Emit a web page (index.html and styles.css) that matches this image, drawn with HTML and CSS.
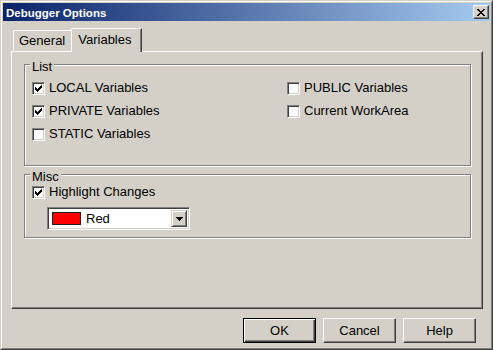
FILE: index.html
```html
<!DOCTYPE html>
<html>
<head>
<meta charset="utf-8">
<title>Debugger Options</title>
<link rel="stylesheet" href="styles.css">
</head>
<body>
<div class="window">
  <div class="frame">
    <div class="titlebar">
      <span class="title">Debugger Options</span>
      <div class="close">
        <svg width="8" height="7" viewBox="0 0 8 7"><path fill="#000" d="M0 0h2v1h-2zM6 0h2v1h-2zM1 1h2v1h-2zM5 1h2v1h-2zM2 2h4v1h-4zM3 3h2v1h-2zM2 4h4v1h-4zM1 5h2v1h-2zM5 5h2v1h-2zM0 6h2v1h-2zM6 6h2v1h-2z"/></svg>
      </div>
    </div>
    <div class="body">
      <div class="tabs">
        <div class="tab">General</div>
        <div class="tab active">Variables</div>
      </div>
      <div class="panel">
        <div class="group list">
          <div class="legend">List</div>
          <div class="cols">
            <div class="col col-left">
              <div class="row"><span class="cb"><svg width="11" height="11" viewBox="0 0 11 11"><path fill="#000" d="M2 4h1v3h-1zM3 5h1v3h-1zM4 6h1v3h-1zM5 5h1v3h-1zM6 4h1v3h-1zM7 3h1v3h-1zM8 2h1v3h-1z"/></svg></span><span class="label">LOCAL Variables</span></div>
              <div class="row"><span class="cb"><svg width="11" height="11" viewBox="0 0 11 11"><path fill="#000" d="M2 4h1v3h-1zM3 5h1v3h-1zM4 6h1v3h-1zM5 5h1v3h-1zM6 4h1v3h-1zM7 3h1v3h-1zM8 2h1v3h-1z"/></svg></span><span class="label">PRIVATE Variables</span></div>
              <div class="row"><span class="cb"></span><span class="label">STATIC Variables</span></div>
            </div>
            <div class="col">
              <div class="row"><span class="cb"></span><span class="label">PUBLIC Variables</span></div>
              <div class="row"><span class="cb"></span><span class="label">Current WorkArea</span></div>
            </div>
          </div>
        </div>
        <div class="group misc">
          <div class="legend">Misc</div>
          <div class="row misc-row"><span class="cb"><svg width="11" height="11" viewBox="0 0 11 11"><path fill="#000" d="M2 4h1v3h-1zM3 5h1v3h-1zM4 6h1v3h-1zM5 5h1v3h-1zM6 4h1v3h-1zM7 3h1v3h-1zM8 2h1v3h-1z"/></svg></span><span class="label">Highlight Changes</span></div>
          <div class="combo">
            <span class="swatch"></span>
            <span class="combo-text">Red</span>
            <span class="drop">
              <svg width="7" height="4" viewBox="0 0 7 4"><path fill="#000" d="M0 0h7v1h-1v1h-1v1h-1v1h-1v-1h-1v-1h-1v-1h-1z"/></svg>
            </span>
          </div>
        </div>
      </div>
      <div class="buttons">
        <div class="btn default">OK</div>
        <div class="btn">Cancel</div>
        <div class="btn">Help</div>
      </div>
    </div>
  </div>
</div>
</body>
</html>
```
FILE: styles.css
```css
html, body {
  margin: 0;
  padding: 0;
  background: #D4D0C8;
}
body {
  font-family: "Liberation Sans", Arial, sans-serif;
  font-size: 13px;
  color: #000;
}
.window {
  width: 493px;
  height: 350px;
  box-sizing: border-box;
  border: 1px solid;
  border-color: #D4D0C8 #404040 #404040 #D4D0C8;
  background: #D4D0C8;
}
.frame {
  height: 100%;
  box-sizing: border-box;
  border: 1px solid;
  border-color: #fff #808080 #808080 #fff;
  padding: 1px;
  display: flex;
  flex-direction: column;
}
.titlebar {
  height: 18px;
  flex: none;
  display: flex;
  align-items: center;
  justify-content: space-between;
  background: linear-gradient(to right, #0A246A, #A6CAF0);
  padding-left: 3px;
}
.title {
  color: #fff;
  font-weight: bold;
  font-size: 11.5px;
  line-height: 14px;
  padding-top: 2px;
}
.close {
  width: 16px;
  height: 14px;
  box-sizing: border-box;
  margin-right: 1px;
  background: #D4D0C8;
  border: 1px solid;
  border-color: #fff #404040 #404040 #fff;
  box-shadow: inset -1px -1px #808080;
  display: flex;
  align-items: center;
  justify-content: center;
  padding-right: 1px;
}
.close svg { display: block; }
.body {
  flex: 1;
  display: flex;
  flex-direction: column;
  padding: 7px 7px 4px 8px;
}
.tabs {
  height: 23px;
  flex: none;
  display: flex;
  align-items: flex-start;
  padding-left: 2px;
}
.tab {
  margin-top: 2px;
  height: 21px;
  box-sizing: border-box;
  padding: 3px 7px 0 5px;
  line-height: 13px;
  border-top: 1px solid #fff;
  border-left: 1px solid #fff;
  border-right: 1px solid #404040;
  box-shadow: inset -1px 0 #808080;
  border-top-left-radius: 2px;
  background: #D4D0C8;
}
.tab.active {
  margin: 0 0 -1px -2px;
  height: 24px;
  padding: 4px 10px 0 6px;
  position: relative;
  z-index: 1;
}
.panel {
  flex: 1;
  box-sizing: border-box;
  border: 1px solid;
  border-color: #fff #404040 #404040 #fff;
  box-shadow: inset -1px -1px #808080;
  padding: 12px 0 0 12px;
}
.group {
  width: 447px;
  box-sizing: border-box;
  border: 1px solid #808080;
  box-shadow: inset 1px 1px #fff, 1px 1px #fff;
}
.group.list { height: 102px; }
.group.misc { height: 64px; margin-top: 8px; }
.legend {
  width: fit-content;
  margin: -5px 0 0 5px;
  padding: 0 2px;
  line-height: 13px;
  background: #D4D0C8;
}
.cols {
  display: flex;
  margin-top: 9px;
  padding-left: 7px;
}
.col {
  display: flex;
  flex-direction: column;
  gap: 10px;
}
.col-left { width: 255px; }
.row {
  display: flex;
  align-items: flex-start;
  height: 13px;
}
.misc-row {
  margin: 3px 0 0 7px;
}
.cb {
  width: 13px;
  height: 13px;
  box-sizing: border-box;
  flex: none;
  background: #fff;
  border: 1px solid;
  border-color: #808080 #fff #fff #808080;
  box-shadow: inset 1px 1px #404040, inset -1px -1px #D4D0C8;
}
.cb svg { display: block; }
.label {
  margin-left: 4px;
  line-height: 11px;
  white-space: nowrap;
}
.combo {
  margin: 8px 0 0 22px;
  width: 143px;
  height: 23px;
  box-sizing: border-box;
  border: 1px solid;
  border-color: #808080 #fff #fff #808080;
  box-shadow: inset 1px 1px #404040, inset -1px -1px #D4D0C8;
  background: #fff;
  padding: 1px 2px 1px 1px;
  display: flex;
  align-items: center;
}
.swatch {
  width: 29px;
  height: 13px;
  box-sizing: border-box;
  margin-left: 3px;
  background: #FF0000;
  border: 1px solid #202020;
  flex: none;
}
.combo-text {
  margin-left: 5px;
  line-height: 13px;
  flex: 1;
}
.drop {
  width: 16px;
  height: 17px;
  box-sizing: border-box;
  background: #D4D0C8;
  border: 1px solid;
  border-color: #D4D0C8 #404040 #404040 #D4D0C8;
  box-shadow: inset 1px 1px #fff, inset -1px -1px #808080;
  display: flex;
  align-items: center;
  justify-content: center;
}
.drop svg { display: block; }
.buttons {
  flex: none;
  display: flex;
  justify-content: flex-end;
  gap: 7px;
  margin-top: 9px;
  padding-right: 7px;
}
.btn {
  width: 73px;
  height: 25px;
  box-sizing: border-box;
  border: 1px solid;
  border-color: #fff #404040 #404040 #fff;
  box-shadow: inset -1px -1px #808080;
  display: flex;
  align-items: center;
  justify-content: center;
  line-height: 13px;
}
.btn.default {
  border: 1px solid #000;
  box-shadow: inset 1px 1px #fff, inset -1px -1px #404040, inset -2px -2px #808080;
}
```
